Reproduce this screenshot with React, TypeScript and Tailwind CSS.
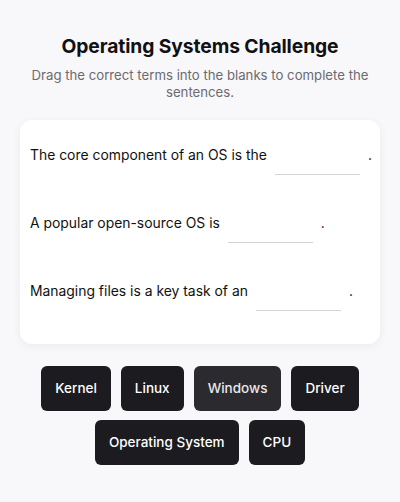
import React from 'react';

const sentences = [
    { before: 'The core component of an OS is the', after: '.' },
    { before: 'A popular open-source OS is', after: '.' },
    { before: 'Managing files is a key task of an', after: '.' },
];

const terms = ['Kernel', 'Linux', 'Windows', 'Driver', 'Operating System', 'CPU'];

export default function App() {
    return (
        <div
            className="min-h-[502px] w-full bg-[#f8f8fa] px-5 pt-[33px] pb-6 text-[#111113]"
            style={{ fontFamily: 'Inter, "Noto Sans", sans-serif' }}
        >
            <h1 className="text-center text-[19.3px] font-bold leading-[26px] tracking-[-0.1px]">
                Operating Systems Challenge
            </h1>
            <p className="mt-[8px] text-center text-[13.2px] leading-[17px] text-[#6b6b70]">
                Drag the correct terms into the blanks to complete the sentences.
            </p>

            <div className="mt-[19px] rounded-xl bg-white px-[10px] pt-[15px] pb-[5px] shadow-[0_2px_10px_rgba(0,0,0,0.06)]">
                {sentences.map((s, i) => (
                    <div key={i} className="mb-[28px] flex h-10 items-center whitespace-nowrap text-[13.9px] leading-5">
                        <span>{s.before}</span>
                        <span className="mx-2 h-10 w-[85px] shrink-0 border-b border-[#d4d4d8] bg-white" />
                        <span>{s.after}</span>
                    </div>
                ))}
            </div>

            <div className="mt-[22px] flex flex-wrap justify-center gap-x-[10px] gap-y-[9px]">
                {terms.map((t) => (
                    <button
                        key={t}
                        className={
                            'h-[45px] rounded-md px-[14px] text-[13.5px] font-[450] ' +
                            (t === 'Windows' ? 'bg-[#2b2a2e] text-[#e8e8ea]' : 'bg-[#1c1b1f] text-white')
                        }
                    >
                        {t}
                    </button>
                ))}
            </div>
        </div>
    );
}
